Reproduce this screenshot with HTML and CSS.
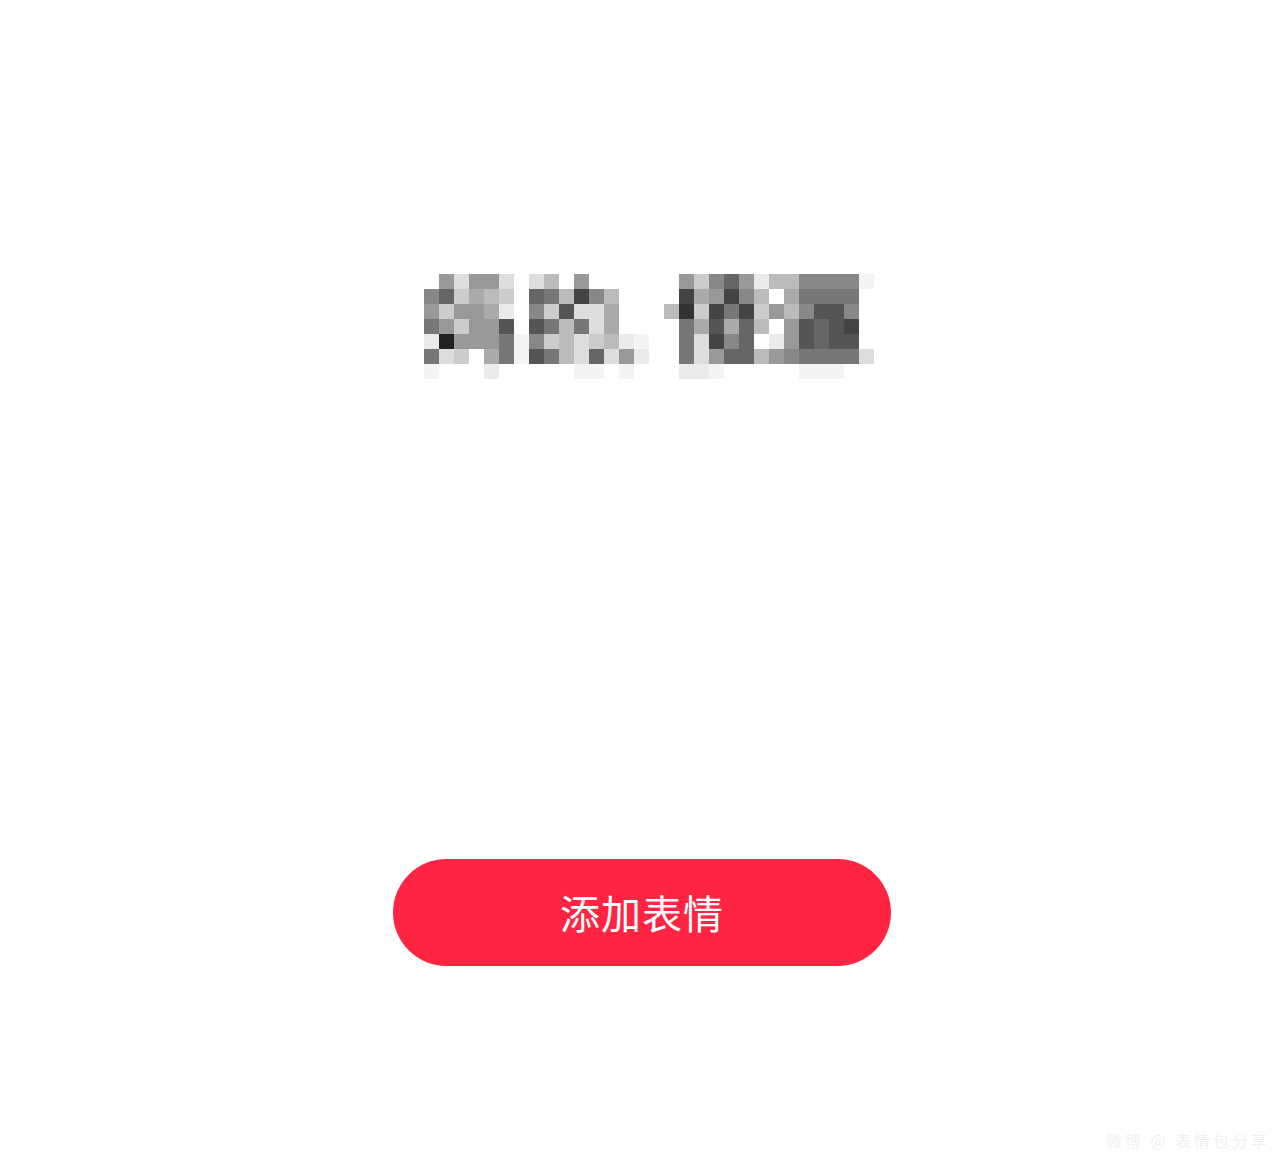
FILE: index.html
```html
<!DOCTYPE html>
<html lang="zh-CN">
<head>
<meta charset="utf-8">
<title>添加表情</title>
<link rel="stylesheet" href="styles.css">
</head>
<body>
<div class="page">
  <div class="mosaic">
    <i class="mf"></i><i class="m9"></i><i class="md"></i><i class="m9"></i><i class="m9"></i><i class="md"></i><i class="mf"></i><i class="md"></i><i class="mb"></i><i class="mf"></i><i class="m9"></i><i class="mf"></i><i class="mf"></i><i class="mf"></i><i class="mf"></i><i class="mf"></i><i class="mf"></i><i class="m9"></i><i class="mc"></i><i class="m8"></i><i class="m6"></i><i class="m9"></i><i class="me"></i><i class="mb"></i><i class="mb"></i><i class="m8"></i><i class="m8"></i><i class="m8"></i><i class="m8"></i><i class="mg"></i>
    <i class="m8"></i><i class="m6"></i><i class="mc"></i><i class="ma"></i><i class="mb"></i><i class="mc"></i><i class="mf"></i><i class="m6"></i><i class="m7"></i><i class="mb"></i><i class="m4"></i><i class="m8"></i><i class="mb"></i><i class="mf"></i><i class="mf"></i><i class="mf"></i><i class="mf"></i><i class="m4"></i><i class="ma"></i><i class="m9"></i><i class="m4"></i><i class="m8"></i><i class="mb"></i><i class="mf"></i><i class="ma"></i><i class="m7"></i><i class="m7"></i><i class="m7"></i><i class="m7"></i><i class="mf"></i>
    <i class="m9"></i><i class="mc"></i><i class="m9"></i><i class="m9"></i><i class="ma"></i><i class="me"></i><i class="mf"></i><i class="m8"></i><i class="mc"></i><i class="m5"></i><i class="md"></i><i class="md"></i><i class="ma"></i><i class="mf"></i><i class="mf"></i><i class="mf"></i><i class="mb"></i><i class="m3"></i><i class="mc"></i><i class="m4"></i><i class="m7"></i><i class="m4"></i><i class="mc"></i><i class="m9"></i><i class="mb"></i><i class="m8"></i><i class="m5"></i><i class="m5"></i><i class="m8"></i><i class="mf"></i>
    <i class="m7"></i><i class="m9"></i><i class="mc"></i><i class="m9"></i><i class="m9"></i><i class="m5"></i><i class="mf"></i><i class="m5"></i><i class="m7"></i><i class="mb"></i><i class="m7"></i><i class="md"></i><i class="ma"></i><i class="mf"></i><i class="mf"></i><i class="mf"></i><i class="mf"></i><i class="m7"></i><i class="ma"></i><i class="m5"></i><i class="ma"></i><i class="m6"></i><i class="mb"></i><i class="mf"></i><i class="m9"></i><i class="m5"></i><i class="m6"></i><i class="m5"></i><i class="m4"></i><i class="mf"></i>
    <i class="me"></i><i class="m2"></i><i class="m9"></i><i class="m9"></i><i class="m9"></i><i class="m7"></i><i class="mg"></i><i class="m8"></i><i class="mc"></i><i class="mb"></i><i class="md"></i><i class="mc"></i><i class="mb"></i><i class="me"></i><i class="mg"></i><i class="mf"></i><i class="mf"></i><i class="m7"></i><i class="md"></i><i class="m4"></i><i class="m8"></i><i class="m6"></i><i class="mf"></i><i class="me"></i><i class="m9"></i><i class="m5"></i><i class="m6"></i><i class="m5"></i><i class="m5"></i><i class="mf"></i>
    <i class="m7"></i><i class="md"></i><i class="mc"></i><i class="mf"></i><i class="ma"></i><i class="m7"></i><i class="mg"></i><i class="m5"></i><i class="m7"></i><i class="mb"></i><i class="md"></i><i class="m6"></i><i class="md"></i><i class="m9"></i><i class="me"></i><i class="mf"></i><i class="mf"></i><i class="m7"></i><i class="md"></i><i class="m9"></i><i class="m6"></i><i class="m6"></i><i class="mb"></i><i class="m9"></i><i class="m8"></i><i class="m7"></i><i class="m7"></i><i class="m7"></i><i class="m7"></i><i class="md"></i>
    <i class="mg"></i><i class="mf"></i><i class="mf"></i><i class="mf"></i><i class="me"></i><i class="mf"></i><i class="mf"></i><i class="mf"></i><i class="mf"></i><i class="mf"></i><i class="mg"></i><i class="mg"></i><i class="mf"></i><i class="mg"></i><i class="mf"></i><i class="mf"></i><i class="mf"></i><i class="me"></i><i class="me"></i><i class="mg"></i><i class="mf"></i><i class="mf"></i><i class="mf"></i><i class="mf"></i><i class="mf"></i><i class="mg"></i><i class="mg"></i><i class="mg"></i><i class="mf"></i><i class="mf"></i>
  </div>
  <button class="add-btn" type="button">添加表情</button>
  <div class="watermark">微博 @ 表情包分享</div>
</div>
</body>
</html>
```

FILE: styles.css
```css
* { box-sizing: border-box; }
html, body {
  margin: 0;
  padding: 0;
  background: #ffffff;
}
body {
  font-family: "Noto Sans CJK SC", "Noto Sans", sans-serif;
}
.page {
  position: relative;
  width: 1284px;
  height: 1164px;
  display: flex;
  flex-direction: column;
  overflow: hidden;
}
.mosaic {
  align-self: flex-start;
  margin: 274px 0 0 424px;
  display: grid;
  grid-template-columns: repeat(30, 15px);
  grid-auto-rows: 15px;
  filter: blur(0.6px);
}
.mosaic i { display: block; }
.m2 { background: #222; }
.m3 { background: #333; }
.m4 { background: #444; }
.m5 { background: #555; }
.m6 { background: #666; }
.m7 { background: #777; }
.m8 { background: #888; }
.m9 { background: #999; }
.ma { background: #aaa; }
.mb { background: #bbb; }
.mc { background: #ccc; }
.md { background: #ddd; }
.me { background: #ebebeb; }
.mg { background: #f4f4f4; }
.mf { background: #ffffff; }

.add-btn {
  align-self: center;
  margin-top: 480px;
  width: 498px;
  height: 107px;
  border: none;
  border-radius: 54px;
  background: #ff2442;
  color: #ffffff;
  font-family: "Noto Sans CJK SC", "Noto Sans", sans-serif;
  font-size: 40px;
  font-weight: 400;
  letter-spacing: 1px;
  padding: 0 0 2px 0;
  cursor: pointer;
}
.watermark {
  position: absolute;
  right: 14px;
  bottom: 12px;
  font-size: 16px;
  color: #f1f1f1;
  letter-spacing: 3px;
}
```
